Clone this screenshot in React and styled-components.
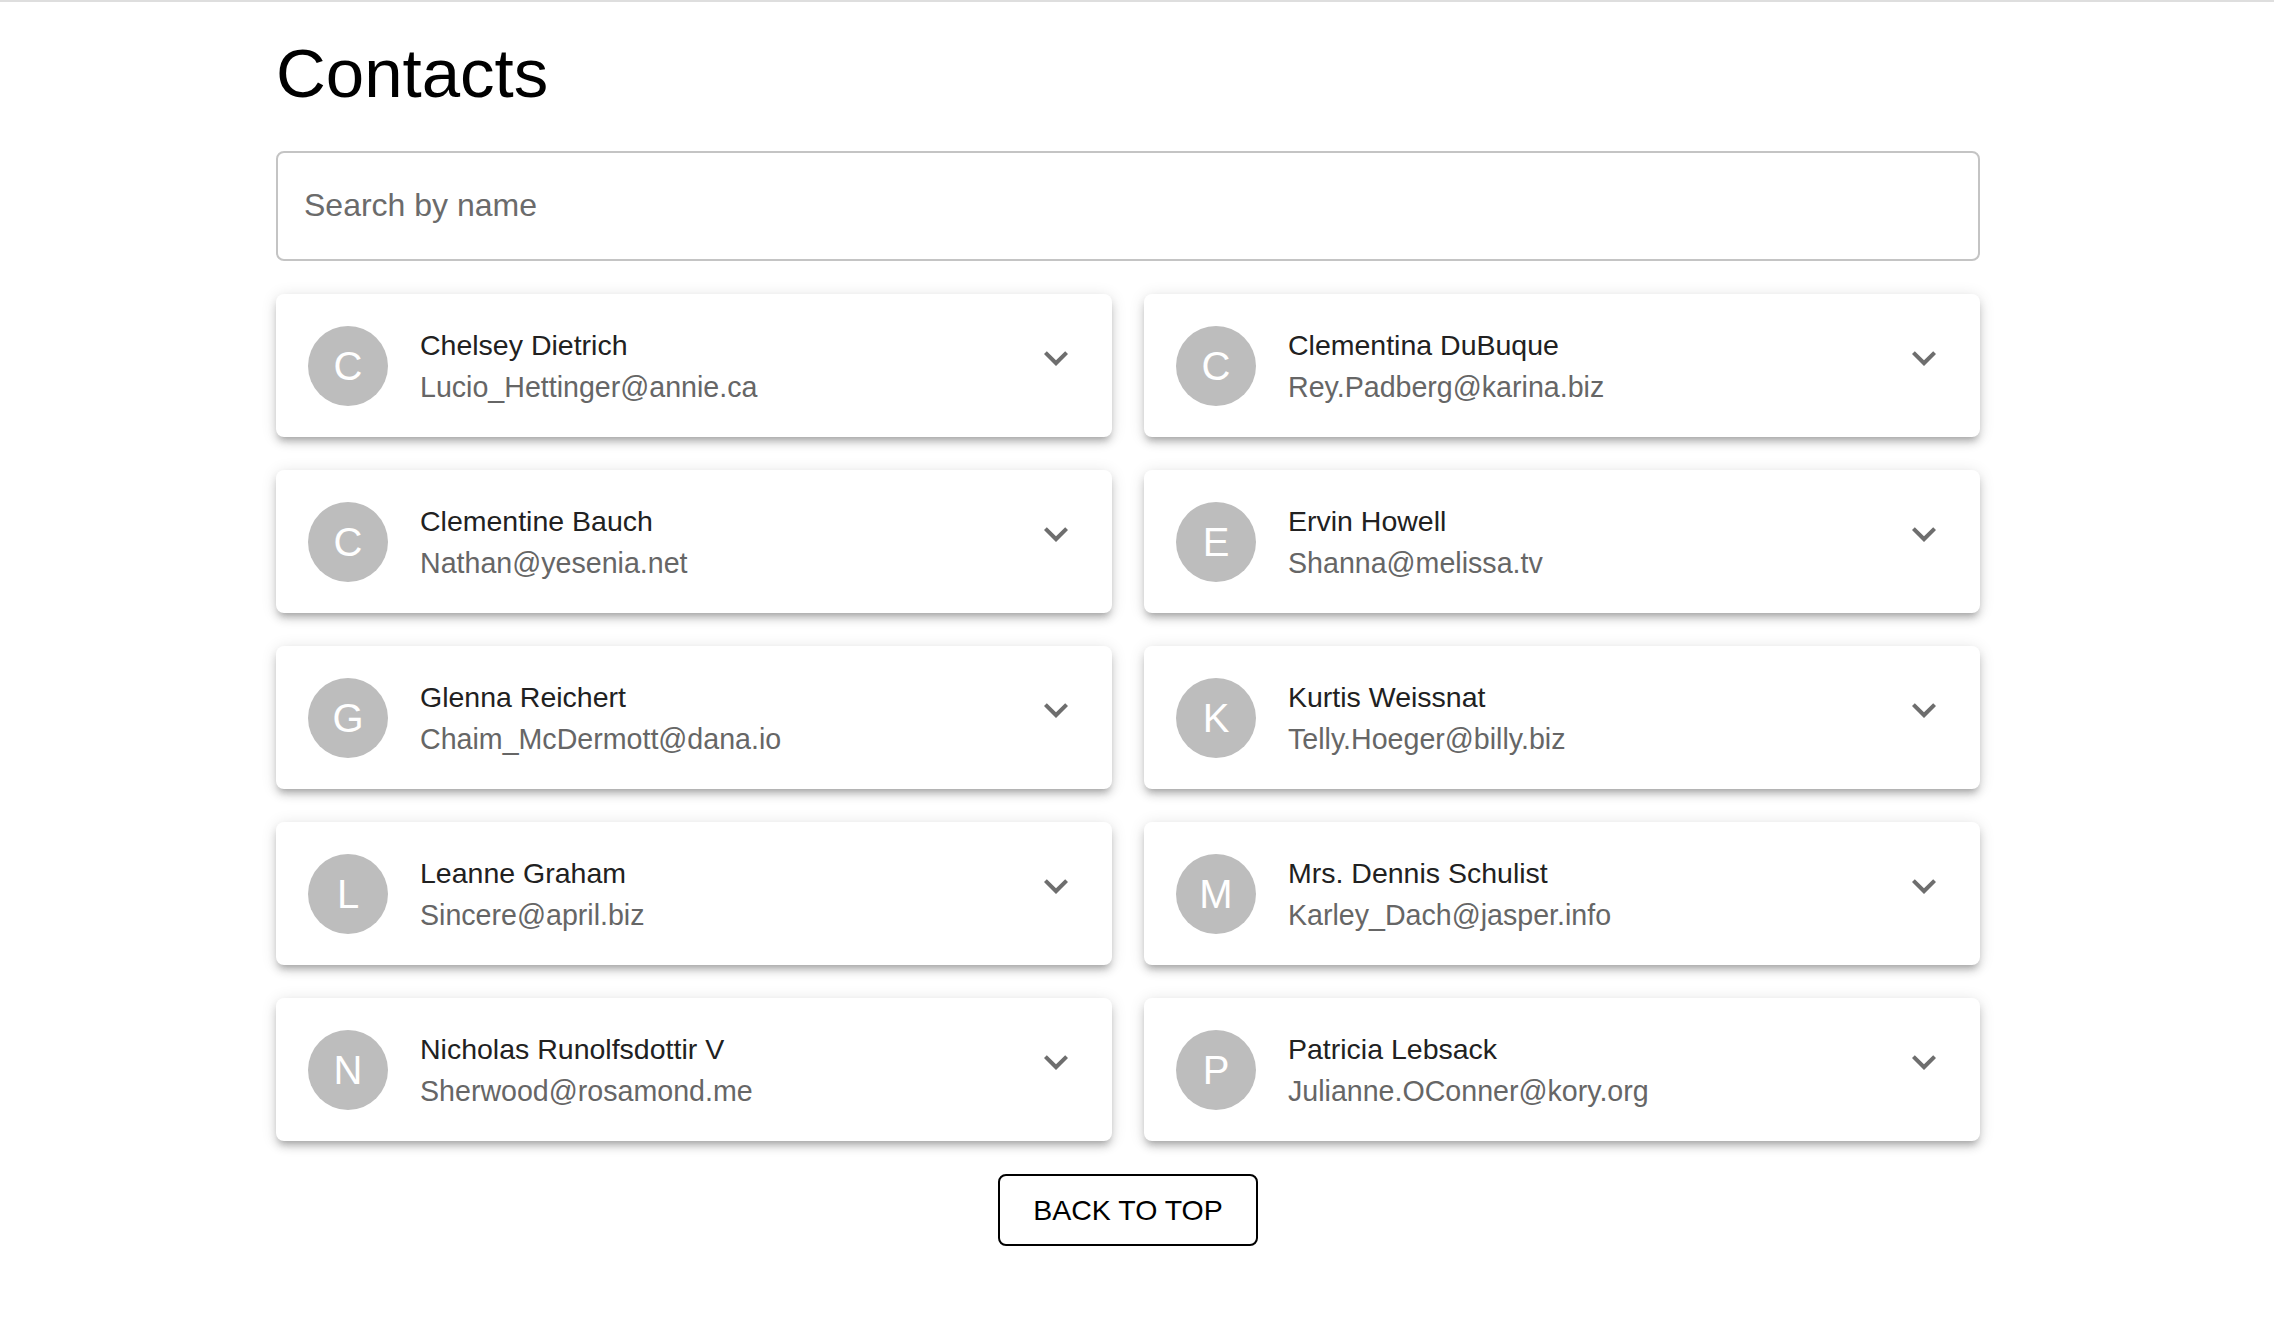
import React from "react";
import styled, { createGlobalStyle } from "styled-components";

const GlobalStyle = createGlobalStyle`
  html, body {
    margin: 0;
    padding: 0;
    background: #ffffff;
  }
  body {
    border-top: 2px solid #dedede;
    font-family: "Liberation Sans", Arial, Helvetica, sans-serif;
  }
  * { box-sizing: border-box; }
`;

const Page = styled.main`
  width: 1704px;
  margin-left: 276px;
  padding-top: 38px;
  padding-bottom: 80px;
  display: flex;
  flex-direction: column;
`;

const Title = styled.h1`
  margin: 0 0 43px 0;
  font-size: 69px;
  line-height: 68px;
  font-weight: 400;
  color: #000000;
`;

const SearchInput = styled.input`
  display: block;
  width: 100%;
  height: 110px;
  margin: 0 0 33px 0;
  padding: 0 26px 2px 26px;
  border: 2px solid #c4c4c4;
  border-radius: 8px;
  font-family: "Liberation Sans", Arial, sans-serif;
  font-size: 32px;
  color: #212121;
  outline: none;
  background: #fff;

  &::placeholder {
    color: #6b6b6b;
    opacity: 1;
  }
`;

const Grid = styled.ul`
  list-style: none;
  margin: 0;
  padding: 0;
  display: grid;
  grid-template-columns: 1fr 1fr;
  column-gap: 32px;
  row-gap: 33px;
`;

const Card = styled.li`
  height: 143px;
  background: #ffffff;
  border-radius: 8px;
  box-shadow: 0 6px 6px -4px rgba(0, 0, 0, 0.2), 0 6px 8px 0 rgba(0, 0, 0, 0.14),
    0 2px 16px 0 rgba(0, 0, 0, 0.12);
  display: flex;
  align-items: center;
  padding: 0 32px;
`;

const Avatar = styled.div`
  width: 80px;
  height: 80px;
  flex: 0 0 80px;
  border-radius: 50%;
  background: #bdbdbd;
  color: #ffffff;
  font-size: 40px;
  display: flex;
  align-items: center;
  justify-content: center;
  margin-right: 32px;
  margin-top: 1px;
`;

const Info = styled.div`
  flex: 1;
  display: flex;
  flex-direction: column;
  margin-top: -2px;
`;

const Name = styled.span`
  font-size: 28.5px;
  line-height: 42px;
  color: #212121;
`;

const Email = styled.span`
  margin-top: 2px;
  font-size: 28.6px;
  line-height: 38px;
  color: #666666;
`;

const ExpandButton = styled.span`
  align-self: flex-start;
  margin-top: 40px;
  width: 48px;
  height: 48px;
  flex: 0 0 48px;
  color: #6e6e6e;
  display: flex;
  align-items: center;
  justify-content: center;

  svg {
    width: 48px;
    height: 48px;
    fill: currentColor;
  }
`;

const Footer = styled.div`
  display: flex;
  justify-content: center;
  margin-top: 33px;
`;

const BackButton = styled.button`
  height: 72px;
  padding: 0 33px;
  border: 2px solid #000000;
  border-radius: 8px;
  background: #ffffff;
  color: #000000;
  font-family: "Liberation Sans", Arial, sans-serif;
  font-size: 28.5px;
  line-height: 1;
  cursor: pointer;
`;

const contacts = [
  ["Chelsey Dietrich", "Lucio_Hettinger@annie.ca"],
  ["Clementina DuBuque", "Rey.Padberg@karina.biz"],
  ["Clementine Bauch", "Nathan@yesenia.net"],
  ["Ervin Howell", "Shanna@melissa.tv"],
  ["Glenna Reichert", "Chaim_McDermott@dana.io"],
  ["Kurtis Weissnat", "Telly.Hoeger@billy.biz"],
  ["Leanne Graham", "Sincere@april.biz"],
  ["Mrs. Dennis Schulist", "Karley_Dach@jasper.info"],
  ["Nicholas Runolfsdottir V", "Sherwood@rosamond.me"],
  ["Patricia Lebsack", "Julianne.OConner@kory.org"],
];

const ExpandMore = () => (
  <svg viewBox="0 0 24 24" aria-hidden="true">
    <path d="M16.59 8.59 12 13.17 7.41 8.59 6 10l6 6 6-6z" />
  </svg>
);

export default function App() {
  return (
    <>
      <GlobalStyle />
      <Page>
        <Title>Contacts</Title>
        <SearchInput placeholder="Search by name" />
        <Grid>
          {contacts.map(([name, email]) => (
            <Card key={name}>
              <Avatar>{name.charAt(0)}</Avatar>
              <Info>
                <Name>{name}</Name>
                <Email>{email}</Email>
              </Info>
              <ExpandButton>
                <ExpandMore />
              </ExpandButton>
            </Card>
          ))}
        </Grid>
        <Footer>
          <BackButton>BACK TO TOP</BackButton>
        </Footer>
      </Page>
    </>
  );
}
